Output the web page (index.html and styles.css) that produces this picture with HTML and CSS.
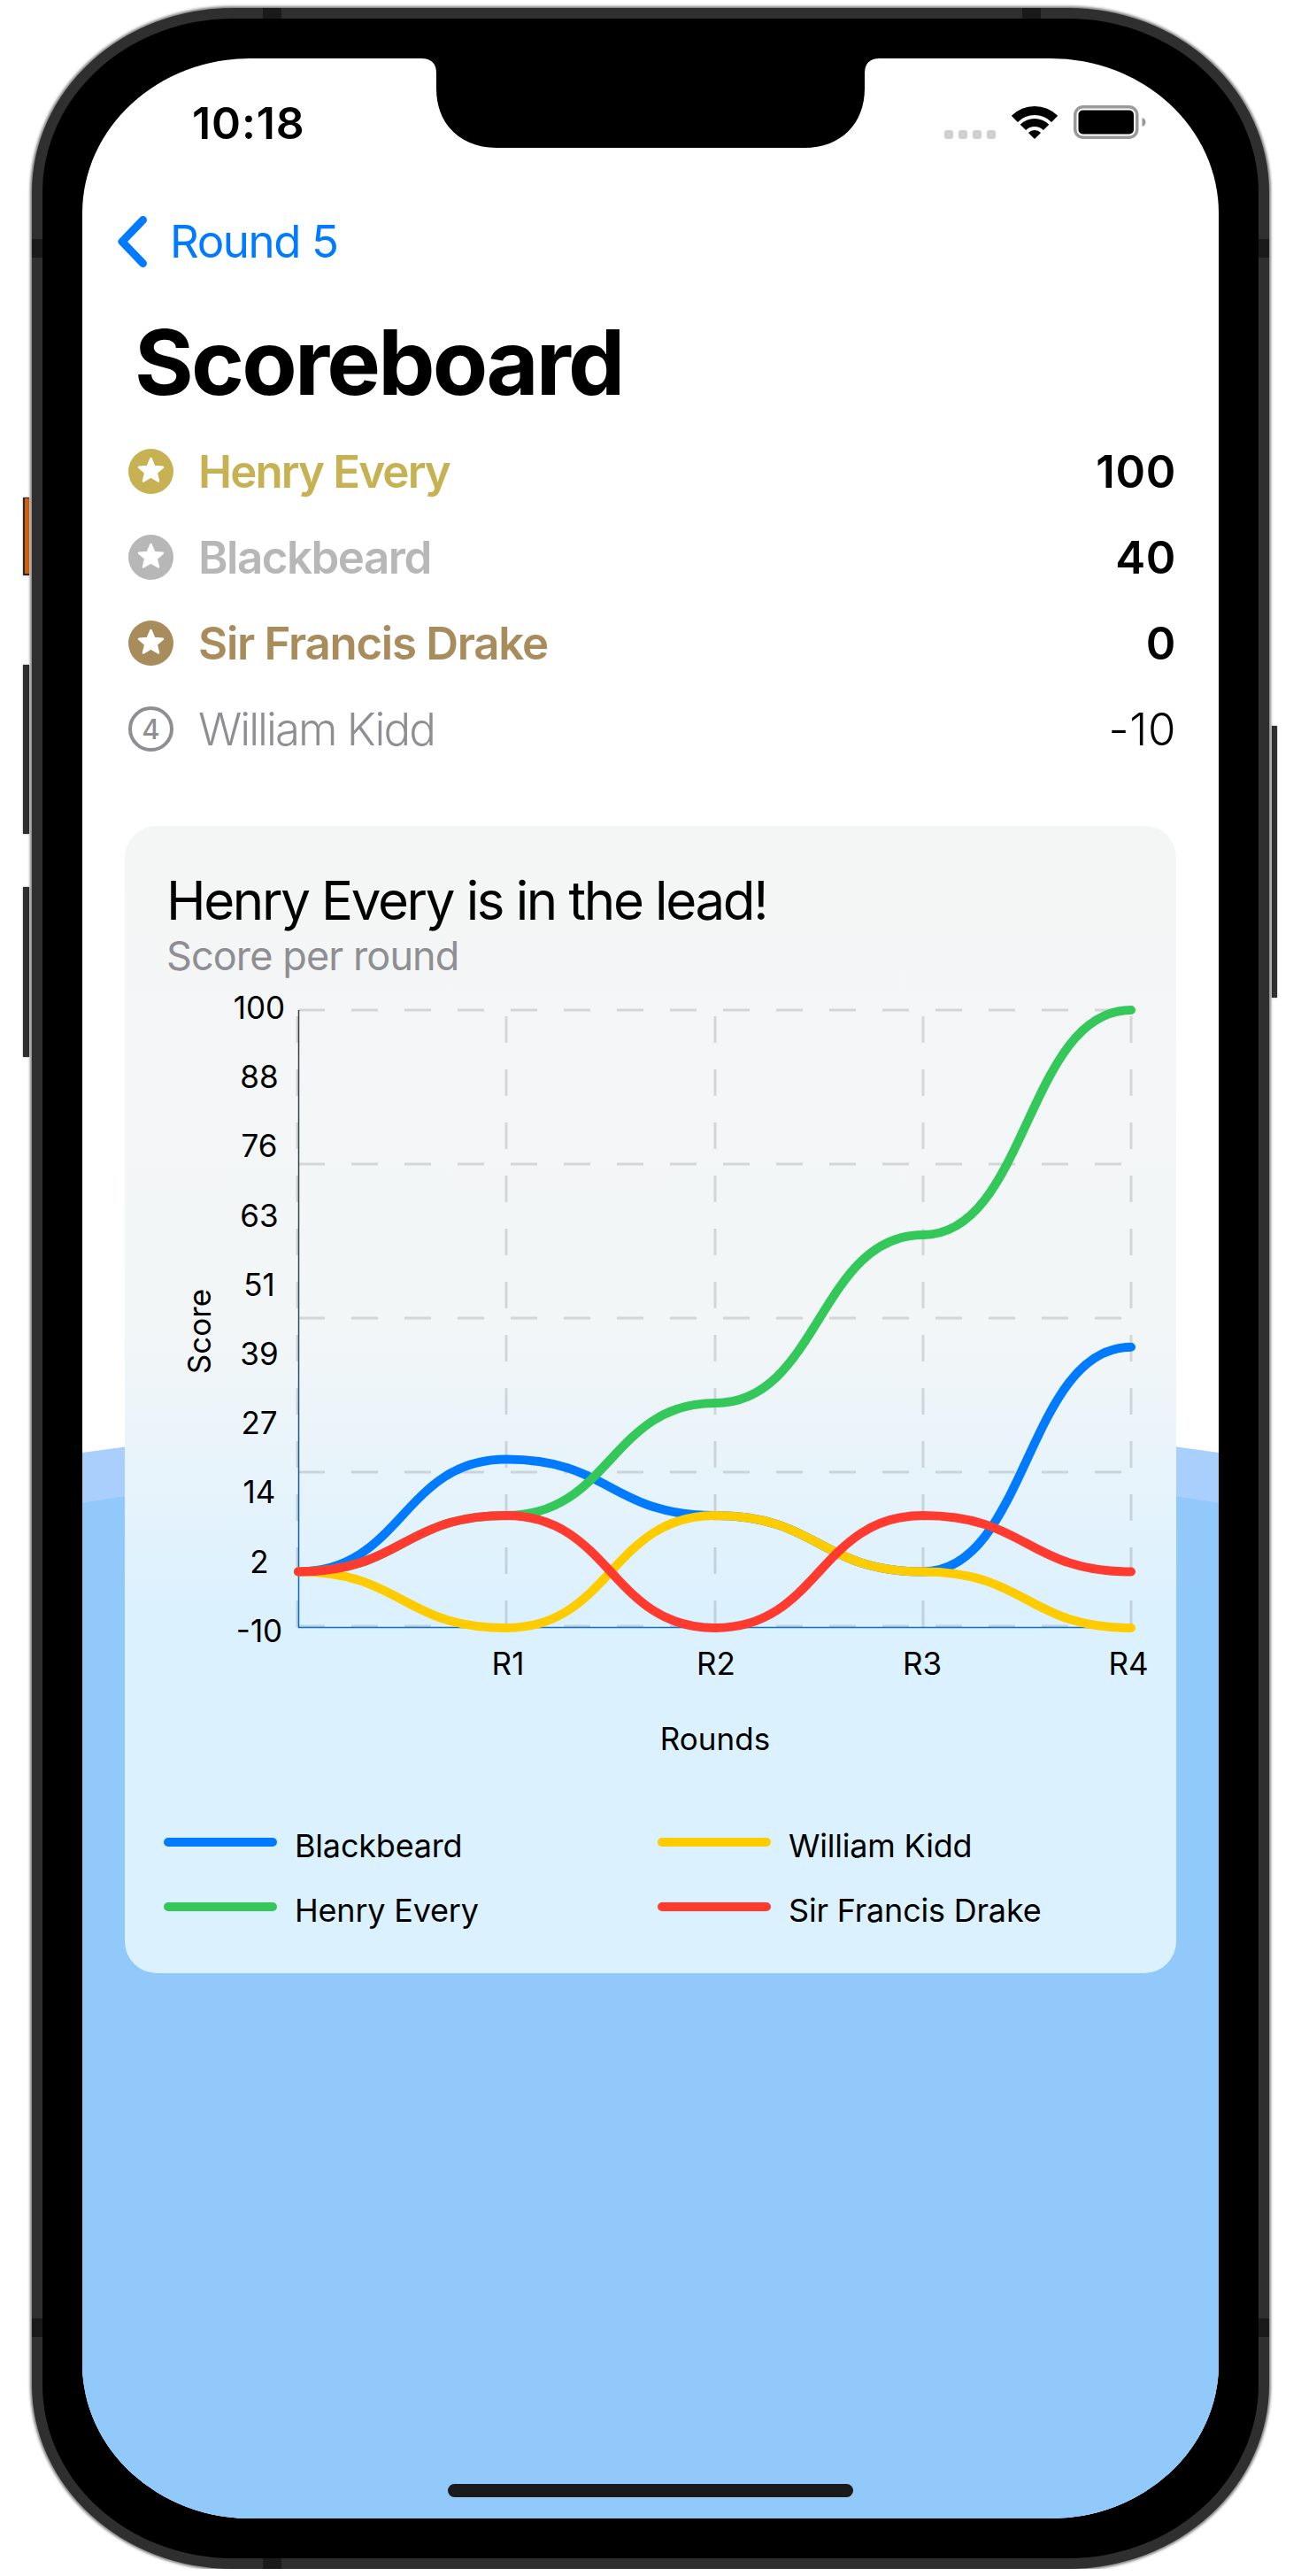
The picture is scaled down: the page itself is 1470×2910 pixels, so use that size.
FILE: index.html
```html
<!DOCTYPE html>
<html lang="en">

<head>
  <meta charset="UTF-8">
  <meta name="viewport" content="width=device-width, initial-scale=1.0">
  <title>Scoreboard</title>
  <link rel="stylesheet" href="styles.css">
</head>

<body>
  <div class="device">
    <span class="side-btn side-mute"></span>
    <span class="side-btn side-vol-up"></span>
    <span class="side-btn side-vol-down"></span>
    <span class="side-btn side-power"></span>

    <div class="frame">
      <span class="band band-top-l"></span>
      <span class="band band-top-r"></span>
      <span class="band band-left-t"></span>
      <span class="band band-right-t"></span>
      <span class="band band-left-b"></span>
      <span class="band band-right-b"></span>
      <span class="band band-bottom"></span>

      <div class="screen">
        <!-- background waves -->
        <svg class="waves" viewBox="0 0 1284 1345" width="1284" height="1345">
          <path fill="#a9cffc" d="M0 141Q642 47 1284 141L1284 1345L0 1345Z" />
          <path fill="#90c9fa" d="M0 198Q642 88 1284 198L1284 1345L0 1345Z" />
        </svg>

        <svg class="notch" viewBox="0 0 518 101" width="518" height="101">
          <path fill="#000" d="M0 0L518 0Q501 0 501 17L501 34C501 74 474 101 433 101L85 101C44 101 17 74 17 34L17 17Q17 0 0 0Z" />
        </svg>

        <div class="status">
          <span class="time">10:18</span>
          <div class="status-icons">
            <div class="signal"><i></i><i></i><i></i><i></i></div>
            <svg class="wifi" viewBox="0 0 50 37" width="50" height="37">
              <path d="M-1.2 10.8A37 37 0 0 1 51.2 10.8L44.1 17.9A27 27 0 0 0 5.9 17.9Z" />
              <path d="M8.7 20.7A23 23 0 0 1 41.3 20.7L34.9 27.1A14 14 0 0 0 15.1 27.1Z" />
              <path d="M17.9 29.9A10 10 0 0 1 32.1 29.9L25 37Z" />
            </svg>
            <svg class="battery" viewBox="0 0 82 38" width="82" height="38">
              <rect x="1.75" y="1.75" width="70" height="34.5" rx="9" fill="none" stroke="#999" stroke-width="3.5" />
              <rect x="5.5" y="5.5" width="62.5" height="27" rx="5" fill="#000" />
              <path fill="#999" d="M77.5 14C80 14.5 81.5 16.5 81.5 19C81.5 21.5 80 23.5 77.5 24Z" />
            </svg>
          </div>
        </div>

        <div class="nav">
          <svg class="chevron" viewBox="0 0 33 58" width="33" height="58">
            <path d="M28.5 4.5L5 29L28.5 53.5" />
          </svg>
          <span class="nav-label">Round 5</span>
        </div>

        <h1 class="page-title">Scoreboard</h1>

        <ul class="players">
          <li class="player gold">
            <svg class="medal" viewBox="0 0 51 51" width="51" height="51"><use href="#medal-star" /></svg>
            <span class="player-name">Henry Every</span>
            <span class="player-score">100</span>
          </li>
          <li class="player silver">
            <svg class="medal" viewBox="0 0 51 51" width="51" height="51"><use href="#medal-star" /></svg>
            <span class="player-name">Blackbeard</span>
            <span class="player-score">40</span>
          </li>
          <li class="player bronze">
            <svg class="medal" viewBox="0 0 51 51" width="51" height="51"><use href="#medal-star" /></svg>
            <span class="player-name">Sir Francis Drake</span>
            <span class="player-score">0</span>
          </li>
          <li class="player rest">
            <span class="rank">4</span>
            <span class="player-name">William Kidd</span>
            <span class="player-score">-10</span>
          </li>
        </ul>

        <div class="card">
          <h2 class="card-title">Henry Every is in the lead!</h2>
          <p class="card-sub">Score per round</p>

          <!-- viewBox is in the chart's own coordinates -->
          <svg class="chart" viewBox="141 1106 1188 957" width="1188" height="957">
            <defs>
              <linearGradient id="axis-y" gradientUnits="userSpaceOnUse" x1="0" y1="1140" x2="0" y2="1840">
                <stop offset="0" stop-color="#3c3c3c" />
                <stop offset="0.5" stop-color="#2f4a60" />
                <stop offset="1" stop-color="#0a6cc4" />
              </linearGradient>
            </defs>

            <g class="grid-h">
              <line x1="337" x2="1278" y1="1141" y2="1141" />
              <line x1="337" x2="1278" y1="1315" y2="1315" />
              <line x1="337" x2="1278" y1="1489" y2="1489" />
              <line x1="337" x2="1278" y1="1663" y2="1663" />
              <line x1="337" x2="1278" y1="1837" y2="1837" />
            </g>
            <g class="grid-v">
              <line x1="336" x2="336" y1="1838" y2="1141" />
              <line x1="572" x2="572" y1="1838" y2="1141" />
              <line x1="808" x2="808" y1="1838" y2="1141" />
              <line x1="1043" x2="1043" y1="1838" y2="1141" />
              <line x1="1278" x2="1278" y1="1838" y2="1141" />
            </g>

            <line class="axis" x1="337.5" x2="337.5" y1="1141" y2="1839" stroke="url(#axis-y)" />
            <line class="axis" x1="337" x2="1278" y1="1838.5" y2="1838.5" stroke="#0f70c4" />

            <g class="curves">
              <path stroke="#007aff" d="M337 1775.5C454.5 1775.5 454.5 1648.6 572 1648.6C690 1648.6 690 1712 808 1712C925.5 1712 925.5 1775.5 1043 1775.5C1160.5 1775.5 1160.5 1521.7 1278 1521.7" />
              <path stroke="#34c759" d="M337 1775.5C454.5 1775.5 454.5 1712 572 1712C690 1712 690 1585 808 1585C925.5 1585 925.5 1395 1043 1395C1160.5 1395 1160.5 1141 1278 1141" />
              <path stroke="#ffcc00" d="M337 1775.5C454.5 1775.5 454.5 1839 572 1839C690 1839 690 1712 808 1712C925.5 1712 925.5 1775.5 1043 1775.5C1160.5 1775.5 1160.5 1839 1278 1839" />
              <path stroke="#ff3b30" d="M337 1775.5C454.5 1775.5 454.5 1712 572 1712C690 1712 690 1839 808 1839C925.5 1839 925.5 1712 1043 1712C1160.5 1712 1160.5 1775.5 1278 1775.5" />
            </g>

            <g class="tick-y">
              <text x="293" y="1151">100</text>
              <text x="293" y="1229">88</text>
              <text x="293" y="1307">76</text>
              <text x="293" y="1386">63</text>
              <text x="293" y="1464">51</text>
              <text x="293" y="1542">39</text>
              <text x="293" y="1620">27</text>
              <text x="293" y="1698">14</text>
              <text x="293" y="1777">2</text>
              <text x="293" y="1855">-10</text>
            </g>
            <g class="tick-x">
              <text x="574" y="1892">R1</text>
              <text x="809" y="1892">R2</text>
              <text x="1042" y="1892">R3</text>
              <text x="1275" y="1892">R4</text>
            </g>
            <text class="axis-title" x="808" y="1977">Rounds</text>
            <text class="axis-title" transform="translate(238 1504) rotate(-90)">Score</text>
          </svg>

          <div class="legend">
            <div class="legend-item"><i class="swatch blue"></i>Blackbeard</div>
            <div class="legend-item"><i class="swatch yellow"></i>William Kidd</div>
            <div class="legend-item"><i class="swatch green"></i>Henry Every</div>
            <div class="legend-item"><i class="swatch red"></i>Sir Francis Drake</div>
          </div>
        </div>

        <div class="home-bar"></div>
      </div>
    </div>
  </div>

  <svg class="defs" width="0" height="0">
    <symbol id="medal-star" viewBox="0 0 51 51">
      <circle cx="25.5" cy="25.5" r="25.5" fill="currentColor" />
      <path fill="#fff" stroke="#fff" stroke-width="2.5" stroke-linejoin="round" d="M25.5 11L29.3 20L39 20.8L31.7 27L34 36.5L25.5 31.5L17 36.5L19.3 27L12 20.8L21.7 20Z" />
    </symbol>
  </svg>
</body>

</html>
```

FILE: styles.css
```css
* {
  margin: 0;
  padding: 0;
  box-sizing: border-box;
}

html,
body {
  background: #fff;
}

body {
  font-family: Inter, "Liberation Sans", sans-serif;
  color: #000;
}

li {
  list-style: none;
}

.defs {
  position: absolute;
}

/* phone body */
.device {
  position: relative;
  width: 1398px;
  height: 2893px;
  margin: 9px 0 0 36px;
}

.frame {
  position: relative;
  height: 100%;
  padding: 45px;
  background: #000;
  border: 12px solid #2f2f2f;
  border-radius: 227px / 208px;
  box-shadow: 0 0 3px 2px rgba(0, 0, 0, .5);
}

.band {
  position: absolute;
  background: #1a1a1a;
}

.band-top-l,
.band-top-r,
.band-bottom {
  width: 21px;
  height: 12px;
}

.band-top-l {
  top: -12px;
  left: 249px;
}

.band-top-r {
  top: -12px;
  left: 1107px;
}

.band-bottom {
  bottom: -12px;
  left: 249px;
}

.band-left-t,
.band-right-t,
.band-left-b,
.band-right-b {
  width: 12px;
  height: 21px;
}

.band-left-t,
.band-left-b {
  left: -12px;
}

.band-right-t,
.band-right-b {
  right: -12px;
}

.band-left-t,
.band-right-t {
  top: 249px;
}

.band-left-b,
.band-right-b {
  top: 2598px;
}

.side-btn {
  position: absolute;
  width: 7px;
  background: #2f2f2f;
  box-shadow: 0 0 2px rgba(0, 0, 0, .5);
}

.side-mute {
  left: -10px;
  top: 553px;
  height: 88px;
  border-left: 2px solid #2a2a2a;
  border-top: 1px solid #2a2a2a;
  border-bottom: 2px solid #2a2a2a;
  background: #d45f0a;
}

.side-vol-up {
  left: -10px;
  top: 742px;
  height: 191px;
}

.side-vol-down {
  left: -10px;
  top: 993px;
  height: 192px;
}

.side-power {
  right: -9px;
  top: 811px;
  height: 307px;
  width: 6px;
}

.screen {
  position: relative;
  height: 100%;
  overflow: hidden;
  background: #fff;
  border-radius: 190px / 175px;
}

.waves {
  position: absolute;
  left: 0;
  top: 1434px;
}

.notch {
  position: absolute;
  top: 0;
  left: 383px;
}

.home-bar {
  position: absolute;
  left: 413px;
  top: 2740px;
  width: 458px;
  height: 15px;
  border-radius: 8px;
  background: #1a1a1a;
}

/* status bar */
.status {
  position: relative;
  display: flex;
  justify-content: space-between;
  padding: 43px 82px 0 124px;
}

.time {
  font-size: 50px;
  font-weight: 600;
  line-height: 60px;
  letter-spacing: .9px;
}

.status-icons {
  display: flex;
  align-items: flex-end;
  gap: 19px;
  height: 48px;
}

.signal {
  display: flex;
  gap: 5.5px;
}

.signal i {
  width: 10.5px;
  height: 10.5px;
  border-radius: 3px;
  background: #cfcfcf;
}

.wifi,
.battery {
  display: block;
}

.wifi {
  overflow: visible;
}

/* back link */
.nav {
  position: relative;
  display: flex;
  align-items: center;
  gap: 26px;
  margin-top: 73px;
  padding-left: 40px;
  color: #007aff;
}

.chevron {
  fill: none;
  stroke: #007aff;
  stroke-width: 9;
  stroke-linecap: round;
  stroke-linejoin: round;
}

.nav-label {
  font-size: 51px;
  line-height: 61px;
  letter-spacing: -1.4px;
}

.page-title {
  position: relative;
  margin-top: 45px;
  padding-left: 59px;
  font-size: 102px;
  font-weight: 700;
  line-height: 122px;
  letter-spacing: -2.8px;
}

/* leaderboard */
.players {
  position: relative;
  margin-top: 14px;
  padding: 0 48px 0 52px;
}

.player {
  display: flex;
  align-items: center;
  height: 97px;
  font-size: 51px;
  font-weight: 600;
}

.player-name {
  margin-left: 28px;
  letter-spacing: -1.5px;
}

.player-score {
  margin-left: auto;
  color: #000;
  letter-spacing: .6px;
}

.medal {
  display: block;
  flex: none;
}

.gold {
  color: #c6b153;
}

.gold .player-name {
  letter-spacing: -1.85px;
}

.silver {
  color: #b7b7b7;
}

.bronze {
  color: #a98c5c;
}

.bronze .player-name {
  letter-spacing: -1.28px;
}

.rest {
  color: #8e8e93;
  font-weight: 300;
}

.rest .player-name {
  letter-spacing: -2px;
}

.rank {
  display: flex;
  flex: none;
  align-items: center;
  justify-content: center;
  width: 51px;
  height: 51px;
  border: 4px solid #8e8e93;
  border-radius: 50%;
  font-size: 31px;
  font-weight: 500;
}

/* chart card */
.card {
  position: relative;
  margin: 61px 48px 0;
  height: 1296px;
  border-radius: 36px;
  padding-top: 48px;
  background: linear-gradient(to bottom, #f4f6f6 0, #f3f6f7 44%, #dcf1fe 68%, #dbf1fe 100%);
}

.card-title {
  padding-left: 47px;
  font-size: 60px;
  font-weight: 400;
  line-height: 72px;
  letter-spacing: -2.35px;
}

.card-sub {
  padding-left: 47px;
  font-size: 45px;
  line-height: 54px;
  letter-spacing: -.9px;
  color: #8e8e93;
}

.chart {
  display: block;
  margin-top: -1px;
  font-family: Inter, "Liberation Sans", sans-serif;
}

.grid-h line,
.grid-v line {
  stroke: #000;
  stroke-opacity: .13;
  stroke-width: 3;
  stroke-dasharray: 30 30;
}

.axis {
  stroke-width: 1.5;
}

.curves path {
  fill: none;
  stroke-width: 10;
  stroke-linecap: round;
}

.tick-y text,
.tick-x text,
.axis-title {
  font-size: 35px;
  text-anchor: middle;
}

.legend {
  display: grid;
  grid-template-columns: 558px 1fr;
  row-gap: 29px;
  padding-left: 44px;
}

.legend-item {
  display: flex;
  gap: 20px;
  font-size: 36px;
  line-height: 44px;
  letter-spacing: -.2px;
}

.swatch {
  flex: none;
  width: 128px;
  height: 9.5px;
  margin-top: 13px;
  border-radius: 5px;
}

.blue {
  background: #007aff;
}

.green {
  background: #34c759;
}

.yellow {
  background: #ffcc00;
}

.red {
  background: #ff3b30;
}
```
